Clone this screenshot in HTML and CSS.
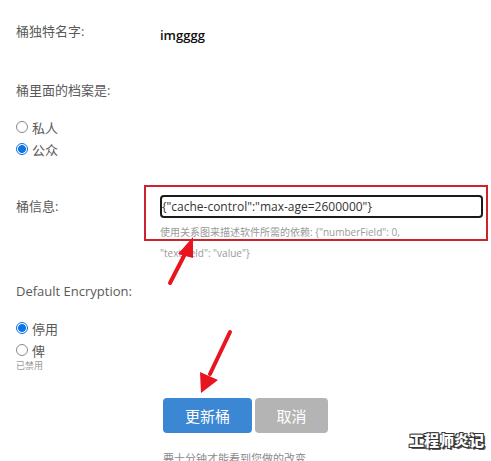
FILE: index.html
```html
<!DOCTYPE html>
<html lang="zh">
<head>
<meta charset="utf-8">
<link rel="stylesheet" href="styles.css">
</head>
<body>
<div class="page">
  <div class="row row-name">
    <div class="label">桶独特名字:</div>
    <div class="value">imgggg</div>
  </div>

  <div class="label section-label">桶里面的档案是:</div>
  <div class="radios radios-access">
    <div class="radio-row"><span class="radio"></span><span>私人</span></div>
    <div class="radio-row"><span class="radio checked"></span><span>公众</span></div>
  </div>

  <div class="row row-meta">
    <div class="label">桶信息:</div>
    <div class="meta-col">
      <div class="input">{"cache-control":"max-age=2600000"}</div>
      <div class="help">使用关系图来描述软件所需的依赖: {"numberField": 0,<br>"textField": "value"}</div>
    </div>
  </div>

  <div class="label section-label enc">Default Encryption:</div>
  <div class="radios radios-enc">
    <div class="radio-row"><span class="radio checked"></span><span>停用</span></div>
    <div class="radio-row"><span class="radio"></span><span>俾</span></div>
    <div class="small-note">已禁用</div>
  </div>

  <div class="actions">
    <button class="btn btn-primary">更新桶</button>
    <button class="btn btn-cancel">取消</button>
  </div>
  <div class="footnote">要十分钟才能看到您做的改变</div>
</div>

<div class="annot-box"></div>
<svg class="annot" width="491" height="461" viewBox="0 0 491 461">
  <path d="M170 283 L186 252" stroke="#e8141e" stroke-width="4" stroke-linecap="round" fill="none"/>
  <polygon points="193,237 178,254 193,258" fill="#e8141e"/>
  <path d="M230 332 L210 374" stroke="#e8141e" stroke-width="4" stroke-linecap="round" fill="none"/>
  <polygon points="201,393 200,372 218,380" fill="#e8141e"/>
</svg>
<div class="watermark">工程师炎记</div>
</body>
</html>
```
FILE: styles.css
```css
html, body {
  margin: 0;
  padding: 0;
  background: #ffffff;
}
body {
  font-family: "Open Sans", "Noto Sans CJK SC", sans-serif;
  color: #555555;
  width: 491px;
  height: 461px;
  overflow: hidden;
  position: relative;
}
.page {
  padding-left: 16px;
}
.row {
  display: grid;
  grid-template-columns: 144px 1fr;
}
.label {
  font-size: 13px;
  line-height: 18px;
  color: #5a5a5a;
}
.row-name {
  margin-top: 22px;
}
.row-name .value {
  margin-top: 4px;
  font-size: 13px;
  line-height: 18px;
  color: #111111;
  font-weight: 600;
}
.section-label {
  margin-top: 37px;
}
.radios-access {
  margin-top: 17px;
}
.radio-row {
  display: flex;
  align-items: center;
  gap: 4px;
  height: 22px;
  font-size: 13px;
  color: #5a5a5a;
}
.radio {
  width: 10px;
  height: 10px;
  border: 1px solid #8a8a8a;
  border-radius: 50%;
  box-sizing: content-box;
  background: #fff;
  flex: none;
}
.radio.checked {
  border-color: #0a6fe0;
  background: radial-gradient(circle, #0a74e8 0 3.6px, #ffffff 4.2px);
}
.row-meta {
  margin-top: 35px;
  align-items: start;
}
.row-meta .label {
  margin-top: 2px;
}
.meta-col {
  width: 323px;
}
.input {
  box-sizing: border-box;
  height: 23px;
  border: 2px solid #1a1a1a;
  border-radius: 4px;
  font-size: 12px;
  line-height: 19px;
  padding-left: 0;
  color: #333333;
}
.help {
  margin-top: 4px;
  font-size: 10px;
  line-height: 21px;
  color: #9a9a9a;
}
.enc {
  margin-top: 18px;
}
.radios-enc {
  margin-top: 17px;
}
.small-note {
  font-size: 9px;
  line-height: 14px;
  color: #9a9a9a;
  margin-top: -2px;
}
.actions {
  display: flex;
  gap: 3px;
  margin-top: 25px;
  margin-left: 147px;
}
.btn {
  border: none;
  border-radius: 4px;
  height: 35px;
  font-family: "Open Sans", "Noto Sans CJK SC", sans-serif;
  font-size: 15px;
  color: #ffffff;
  padding: 0;
}
.btn-primary {
  width: 89px;
  background: #3b87d4;
}
.btn-cancel {
  width: 73px;
  background: #b4b4b4;
}
.footnote {
  margin-left: 147px;
  margin-top: 19px;
  font-size: 11px;
  line-height: 14px;
  color: #8a8a8a;
}
.annot-box {
  position: absolute;
  left: 144px;
  top: 185px;
  width: 340px;
  height: 52px;
  border: 2px solid #d0222c;
}
.annot {
  position: absolute;
  left: 0;
  top: 0;
  pointer-events: none;
}
.watermark {
  position: absolute;
  left: 409px;
  top: 431px;
  font-family: "Noto Sans CJK SC", sans-serif;
  font-weight: 900;
  font-size: 15px;
  line-height: 18px;
  color: #ffffff;
  text-shadow: 1px 1px 0 #333, -1px -1px 0 #333, 1px -1px 0 #333, -1px 1px 0 #333, 2px 2px 0 #555;
}
```
